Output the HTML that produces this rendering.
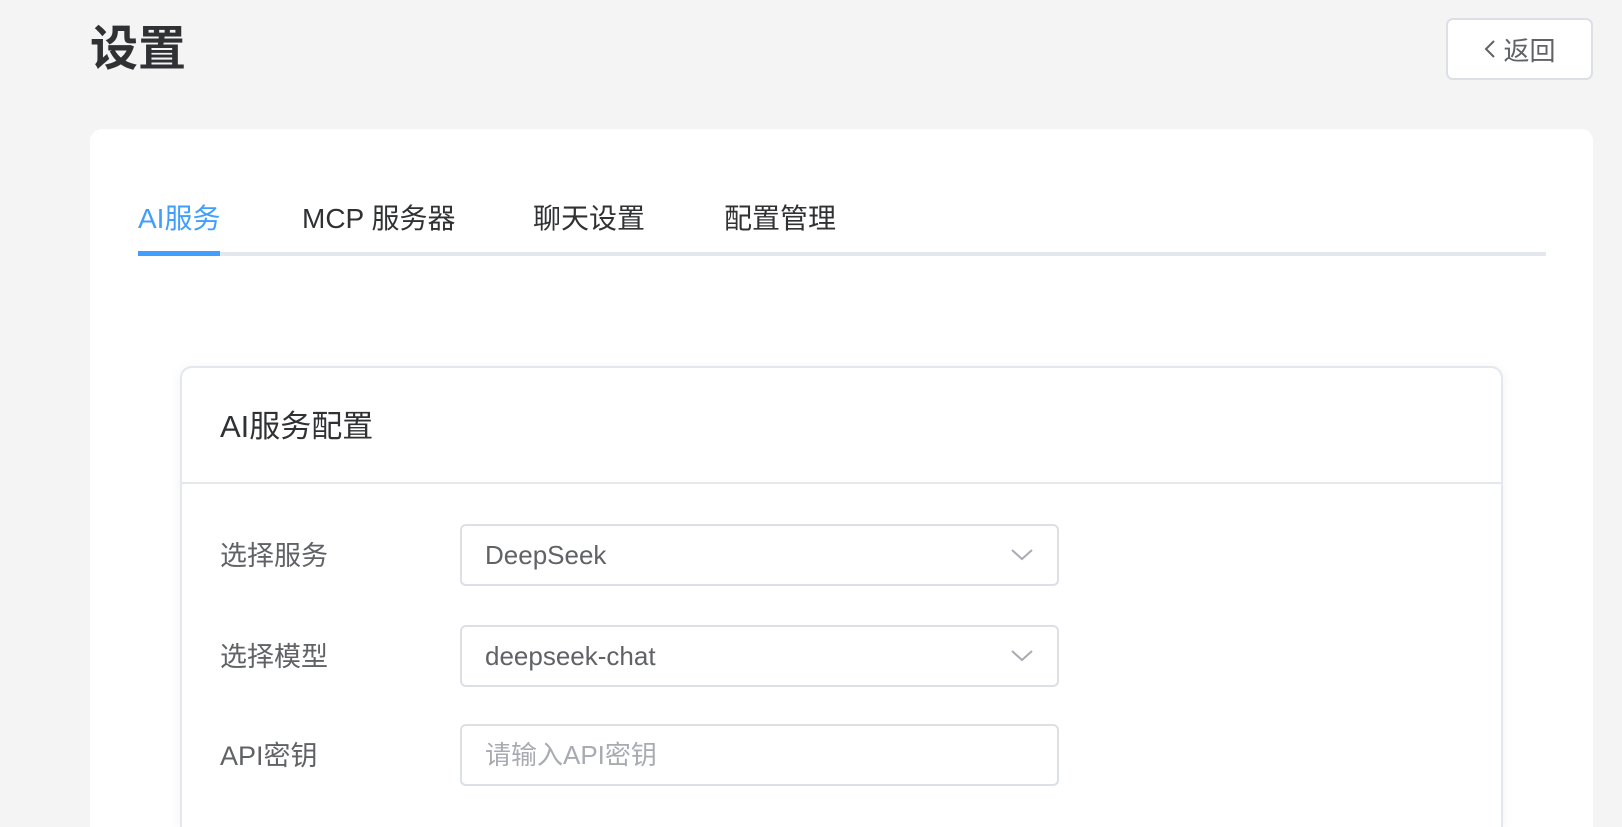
<!DOCTYPE html>
<html><head><meta charset="utf-8"><style>
*{box-sizing:border-box;margin:0;padding:0}
html,body{width:1622px;height:827px;overflow:hidden}
body{background:#f4f4f5;font-family:"Liberation Sans","Noto Sans CJK SC",sans-serif;position:relative;color:#303133}
h1{position:absolute;left:90px;top:20px;font-size:48px;font-weight:bold;line-height:60px;color:#303133}
.back{position:absolute;left:1446px;top:18px;width:147px;height:62px;border:2px solid #dcdfe6;border-radius:7px;background:#fff;font-size:26px;color:#606266;display:flex;align-items:center;justify-content:center;gap:6px}
.card{position:absolute;left:90px;top:129px;width:1503px;height:698px;background:#fff;border-radius:12px 12px 0 0}
.tab{position:absolute;top:201px;font-size:28px;line-height:36px;color:#303133}
.line{position:absolute;left:138px;top:252px;width:1408px;height:4px;background:#e4e7ed}
.act{position:absolute;left:138px;top:251px;width:82px;height:5px;background:#409eff}
.inner{position:absolute;left:180px;top:366px;width:1323px;height:461px;background:#fff;border:2px solid #e4e7ed;border-bottom:none;border-radius:12px 12px 0 0;box-shadow:0 2px 12px rgba(0,0,0,.06)}
.ht{position:absolute;left:220px;top:407px;font-size:31px;line-height:40px;color:#303133}
.div{position:absolute;left:181px;top:482px;width:1321px;height:2px;background:#e4e7ed}
.lab{position:absolute;left:220px;font-size:27px;line-height:36px;color:#606266}
.inp{position:absolute;left:460px;width:599px;height:62px;border:2px solid #dcdfe6;border-radius:6px;font-size:26px;line-height:58px;padding-left:23px;color:#606266}
.chev{position:absolute;right:24px;top:22px}
</style></head><body>
<h1>设置</h1>
<div class="back"><svg width="14" height="22" viewBox="0 0 14 22"><path d="M11 3 L3 11 L11 19" fill="none" stroke="#606266" stroke-width="2"/></svg><span>返回</span></div>
<div class="card"></div>
<div class="tab" style="left:138px;color:#409eff">AI服务</div>
<div class="tab" style="left:302px">MCP 服务器</div>
<div class="tab" style="left:533px">聊天设置</div>
<div class="tab" style="left:724px">配置管理</div>
<div class="line"></div><div class="act"></div>
<div class="inner"></div>
<div class="ht">AI服务配置</div>
<div class="div"></div>
<div class="lab" style="top:538px">选择服务</div>
<div class="inp" style="top:524px">DeepSeek<svg class="chev" width="22" height="14" viewBox="0 0 22 14"><path d="M1 2 L11 11 L21 2" fill="none" stroke="#a8abb2" stroke-width="2"/></svg></div>
<div class="lab" style="top:639px">选择模型</div>
<div class="inp" style="top:625px">deepseek-chat<svg class="chev" width="22" height="14" viewBox="0 0 22 14"><path d="M1 2 L11 11 L21 2" fill="none" stroke="#a8abb2" stroke-width="2"/></svg></div>
<div class="lab" style="top:738px">API密钥</div>
<div class="inp" style="top:724px;color:#a8abb2">请输入API密钥</div>
</body></html>
